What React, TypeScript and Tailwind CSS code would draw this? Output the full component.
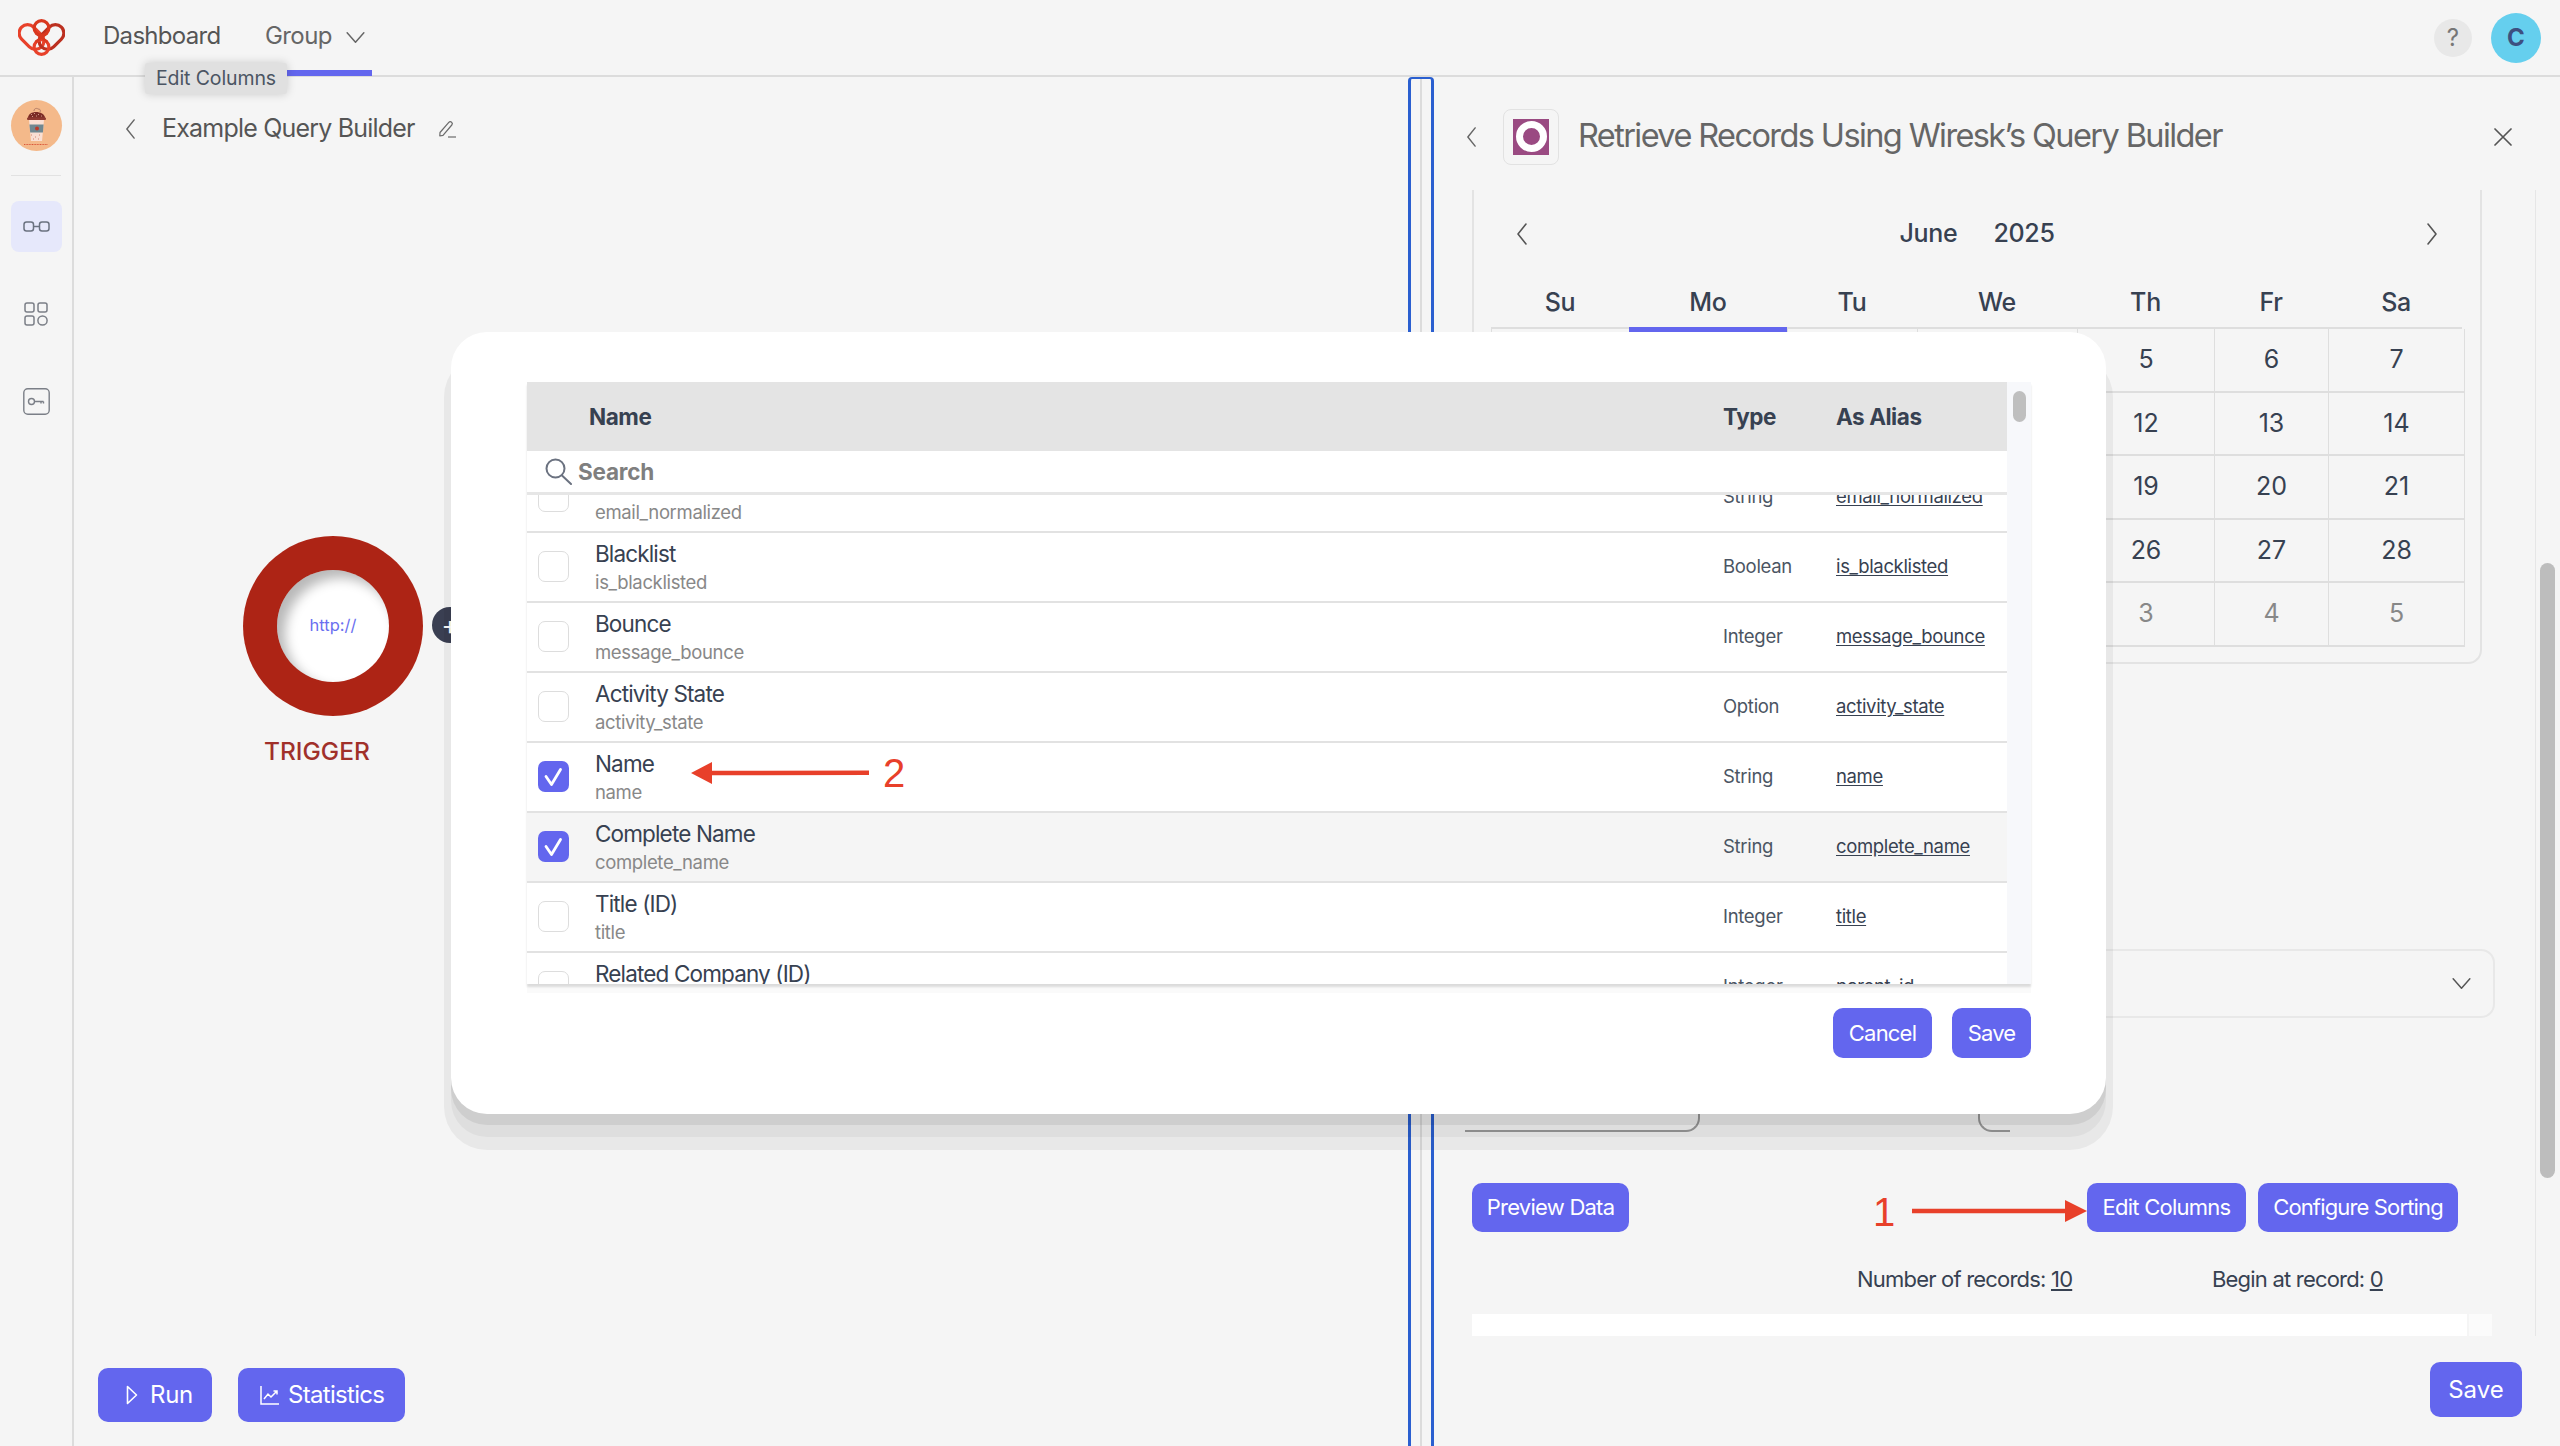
const INDIGO = "bg-[#6366ee]";

const rows = [
  { title: "", sub: "email_normalized", type: "String", alias: "email_normalized", checked: false },
  { title: "Blacklist", sub: "is_blacklisted", type: "Boolean", alias: "is_blacklisted", checked: false },
  { title: "Bounce", sub: "message_bounce", type: "Integer", alias: "message_bounce", checked: false },
  { title: "Activity State", sub: "activity_state", type: "Option", alias: "activity_state", checked: false },
  { title: "Name", sub: "name", type: "String", alias: "name", checked: true },
  { title: "Complete Name", sub: "complete_name", type: "String", alias: "complete_name", checked: true, hover: true },
  { title: "Title (ID)", sub: "title", type: "Integer", alias: "title", checked: false },
  { title: "Related Company (ID)", sub: "parent_id", type: "Integer", alias: "parent_id", checked: false },
];

const weekdays = ["Su", "Mo", "Tu", "We", "Th", "Fr", "Sa"];
const days = [
  [1, 2, 3, 4, 5, 6, 7],
  [8, 9, 10, 11, 12, 13, 14],
  [15, 16, 17, 18, 19, 20, 21],
  [22, 23, 24, 25, 26, 27, 28],
  [29, 30, 1, 2, 3, 4, 5],
];

function Chevron({ dir, className }: { dir: "left" | "right" | "down"; className?: string }) {
  const pts = dir === "left" ? "10,1 2,11 10,21" : dir === "right" ? "2,1 10,11 2,21" : "1,2 10,12 19,2";
  const box = dir === "down" ? "0 0 20 14" : "0 0 12 22";
  return (
    <svg viewBox={box} className={className} fill="none" stroke="currentColor" strokeWidth="1.6" strokeLinecap="round" strokeLinejoin="round">
      <polyline points={pts} />
    </svg>
  );
}

function Logo() {
  return (
    <svg viewBox="0 0 47 37" className="h-[37px] w-[47px]" fill="none" strokeWidth="3.2">
      <rect x="5" y="4" width="17" height="28" rx="8.5" transform="rotate(-45 13.5 18)" stroke="#e8412a" />
      <rect x="25" y="4" width="17" height="28" rx="8.5" transform="rotate(45 33.5 18)" stroke="#bc3020" />
      <circle cx="23.5" cy="9" r="7.4" stroke="#d9381f" />
      <circle cx="23.5" cy="28" r="7.4" stroke="#e8412a" />
      <path d="M17.5 14l12 9M29.5 14l-12 9" stroke="#d9381f" strokeWidth="2.4" />
    </svg>
  );
}

function CupAvatar() {
  return (
    <div className="flex h-[51px] w-[51px] items-center justify-center rounded-full bg-[#f4b98a]">
      <svg viewBox="0 0 26 40" className="h-[40px] w-[26px]" fill="none">
        <path d="M11 5c0-3 3-3 4-2M15 3c2 0 3 1 2 3" stroke="#a5705f" strokeWidth="0.8" />
        <path d="M5 12c0-4 4-6 8-6s9 2 9 6z" fill="#7c2d26" />
        <path d="M8 8.5h1M11 7.5h1M15 8.5h1M18 10h1M9 10.5h1M13 10h1" stroke="#e9b9a5" strokeWidth="0.8" />
        <rect x="4" y="11.5" width="19" height="2.6" rx="1" fill="#8f3a30" />
        <path d="M6 14h15l-2 21H8z" fill="#f9dfd3" />
        <path d="M6.4 18.5h14.2l-.7 8H7.2z" fill="#6f8790" />
        <circle cx="14" cy="22.5" r="2" fill="#b93a2a" />
        <path d="M8 29h1M12 31h1M16 29h1M10 33h1M15 33h1" stroke="#c9705c" strokeWidth="0.8" />
        <path d="M1 38.5h24" stroke="#d9573a" strokeWidth="1" strokeDasharray="1 0.6" />
      </svg>
    </div>
  );
}

function GlassesIcon() {
  return (
    <svg viewBox="0 0 27 11" className="h-[11px] w-[27px]" fill="none" stroke="#6b7280" strokeWidth="1.5">
      <rect x="1" y="1" width="9.5" height="9" rx="2.5" />
      <rect x="16.5" y="1" width="9.5" height="9" rx="2.5" />
      <path d="M10.5 5.5h6" />
    </svg>
  );
}

function GridIcon() {
  return (
    <svg viewBox="0 0 24 24" className="h-[24px] w-[24px]" fill="none" stroke="#7b7f87" strokeWidth="1.5">
      <rect x="1" y="1" width="9" height="9" rx="2" />
      <rect x="14" y="1" width="9" height="9" rx="2" />
      <rect x="1" y="14" width="9" height="9" rx="2" />
      <circle cx="18.5" cy="18.5" r="4.6" />
    </svg>
  );
}

function KeyIcon() {
  return (
    <svg viewBox="0 0 27 27" className="h-[27px] w-[27px]" fill="none" stroke="#7b7f87" strokeWidth="1.4">
      <rect x="0.8" y="0.8" width="25.4" height="25.4" rx="4" />
      <circle cx="8.5" cy="13.5" r="3" />
      <path d="M11.5 13.5h9M18 13.5v2M20.5 13.5v2" />
    </svg>
  );
}

function Pencil() {
  return (
    <svg viewBox="0 0 18 18" className="h-[18px] w-[18px]" fill="none" stroke="#6b6b6b" strokeWidth="1.2" strokeLinejoin="round">
      <path d="M2 12.5 10.8 2.4a2 2 0 0 1 2.8-.2 2 2 0 0 1 .2 2.8L5 15.4l-3.2.6z" />
      <path d="M10 17h8" />
    </svg>
  );
}

function SearchIcon() {
  return (
    <svg viewBox="0 0 27 27" className="h-[27px] w-[27px]" fill="none" stroke="#6b7280" strokeWidth="2" strokeLinecap="round">
      <circle cx="10.5" cy="10.5" r="9" />
      <path d="M17 17.5 26 26" />
    </svg>
  );
}

function Check() {
  return (
    <svg viewBox="0 0 31 31" className="h-[31px] w-[31px]" fill="none" stroke="#fff" strokeWidth="2.8" strokeLinecap="round" strokeLinejoin="round">
      <path d="M8 15.5l5.5 8 9-15" />
    </svg>
  );
}

function Button({ children, className }: { children: React.ReactNode; className: string }) {
  return (
    <button className={`flex items-center justify-center rounded-[10px] ${INDIGO} text-white ${className}`}>
      {children}
    </button>
  );
}

function ArrowLeft() {
  return (
    <svg viewBox="0 0 178 22" className="h-[22px] w-[178px]" fill="#e8402a">
      <path d="M0 11 21 0v8.8L178 8.5v4.5L21 13.2V22z" />
    </svg>
  );
}

function ArrowRight() {
  return (
    <svg viewBox="0 0 175 22" className="h-[22px] w-[175px]" fill="#e8402a">
      <path d="M175 11 153 0v8.8H0v4.4h153V22z" />
    </svg>
  );
}

function ColumnRow({ row }: { row: (typeof rows)[number] }) {
  return (
    <div className={`grid h-[70px] grid-cols-[68px_1128px_113px_171px] items-center border-b-2 border-[#e2e2e2] ${row.hover ? "bg-[#f5f5f5]" : "bg-white"}`}>
      <div className="pb-[1px] pl-[11px]">
        {row.checked ? (
          <div className={`h-[31px] w-[31px] rounded-[7px] ${INDIGO}`}>
            <Check />
          </div>
        ) : (
          <div className="h-[31px] w-[31px] rounded-[7px] border border-[#dddddd] bg-white" />
        )}
      </div>
      <div className="flex flex-col pt-[2px]">
        <span className="h-[28px] text-[22.5px] leading-[28px] tracking-[-0.85px] text-[#374151]">{row.title}</span>
        <span className="h-[28px] text-[18.5px] leading-[28px] tracking-[-0.35px] text-[#888888]">{row.sub}</span>
      </div>
      <span className="text-[18.5px] tracking-[-0.3px] text-[#4b5563]">{row.type}</span>
      <span className="text-[18.5px] tracking-[-0.35px] text-[#374151] underline underline-offset-2">{row.alias}</span>
    </div>
  );
}

function Calendar() {
  const cols = "grid grid-cols-[138px_158px_130px_160px_137px_114px_136px]";
  return (
    <div className="h-[474px] w-[1010px] rounded-b-[14px] border-x-2 border-b-2 border-[#e3e3e3] pl-[17px] pr-[18px]">
      <div className="flex h-[86px] items-center justify-between pl-[25px] pr-[24px] pt-[2px] text-[#555]">
        <Chevron dir="left" className="h-[22px] w-[12px]" />
        <div className="flex gap-[36px] text-[25px] font-medium tracking-[-0.3px] text-[#374151]">
          <span>June</span>
          <span>2025</span>
        </div>
        <Chevron dir="right" className="h-[22px] w-[12px]" />
      </div>
      <div className={`${cols} h-[51px] items-center pt-[2px] text-[25px] font-medium tracking-[-0.3px] text-[#374151]`}>
        {weekdays.map((d) => (
          <div key={d} className={`relative flex h-full items-center justify-center ${d === "Mo" ? "z-10" : ""}`}>
            {d}
            {d === "Mo" ? <div className={`absolute inset-x-0 top-full h-[5px] ${INDIGO}`} /> : null}
          </div>
        ))}
      </div>
      <div className={`${cols} border-t-2 border-l border-[#dedede]`}>
        {days.flat().map((n, i) => (
          <div
            key={i}
            className={`flex h-[63.6px] items-center justify-center border-r border-b-2 border-[#dedede] text-[25px] ${i >= 30 ? "text-[#888888]" : "text-[#374151]"}`}
          >
            {n}
          </div>
        ))}
      </div>
    </div>
  );
}

function ColumnsModal() {
  return (
    <div className="absolute left-[451px] top-[332px] h-[782px] w-[1655px] rounded-[36px] bg-white pl-[76px] pt-[50px] shadow-[0_11px_0_0_rgba(0,0,0,0.07),0_23px_0_0_rgba(0,0,0,0.04),0_29px_0_7px_rgba(0,0,0,0.05)]">
      <div className="flex h-[602px] w-[1504px] shadow-[0_3px_2px_rgba(0,0,0,0.12),0_9px_0_rgba(0,0,0,0.02)]">
        <div className="flex w-[1480px] flex-col">
          <div className="grid h-[69px] shrink-0 grid-cols-[62px_1134px_113px_171px] items-center bg-[#e4e4e4] text-[22.5px] font-bold tracking-[-0.45px] text-[#374151]">
            <span />
            <span>Name</span>
            <span>Type</span>
            <span>As Alias</span>
          </div>
          <div className="flex h-[44px] shrink-0 items-center gap-[6px] border-b-[3px] border-[#e6e6e6] bg-white pl-[18px] text-[22.5px] font-bold tracking-[-0.2px] text-[#7f7f7f]">
            <SearchIcon />
            <span>Search</span>
          </div>
          <div className="min-h-0 flex-1 overflow-hidden">
            <div className="-mt-[32px]">
              {rows.map((r) => (
                <ColumnRow key={r.sub} row={r} />
              ))}
            </div>
          </div>
        </div>
        <div className="w-[24px] bg-[#f7f8fb] px-[6px] pt-[9px]">
          <div className="h-[31px] w-[13px] rounded-full bg-[#bfbfbf]" />
        </div>
      </div>
      <div className="mt-[24px] flex w-[1504px] justify-end gap-[20px] text-[22px] tracking-[-0.8px]">
        <Button className="h-[50px] w-[99px]">Cancel</Button>
        <Button className="h-[50px] w-[79px]">Save</Button>
      </div>
    </div>
  );
}

export default function App() {
  return (
    <div className="relative flex h-[1446px] w-[2560px] flex-col overflow-hidden bg-[#f5f5f5] font-['Inter',sans-serif]">
      <header className="flex h-[77px] shrink-0 items-center border-b-2 border-[#dcdcdc]">
        <div className="ml-[18px] mr-[38px]">
          <Logo />
        </div>
        <span className="w-[118px] pb-[3px] text-[24px] tracking-[-0.7px] text-[#555555]">Dashboard</span>
        <div className="relative ml-[20px] flex h-full w-[131px] items-center gap-[14px] pl-[24px] text-[24px] tracking-[-0.6px] text-[#666666]">
          <span className="pb-[3px]">Group</span>
          <Chevron dir="down" className="h-[13px] w-[19px]" />
          <div className={`absolute inset-x-0 -bottom-[1px] h-[6px] ${INDIGO}`} />
        </div>
        <div className="ml-auto flex items-center gap-[19px] pr-[19px]">
          <div className="flex h-[38px] w-[38px] items-center justify-center rounded-full bg-[#e8e8e8] text-[24px] text-[#777777]">?</div>
          <div className="flex h-[50px] w-[50px] items-center justify-center rounded-full bg-[#65cfee] text-[24px] font-bold text-[#3d5080]">C</div>
        </div>
      </header>

      <div className="flex min-h-0 flex-1">
        <aside className="flex w-[74px] shrink-0 flex-col items-center border-r-2 border-[#dcdcdc] pt-[23px]">
          <CupAvatar />
          <div className="mt-[24px] h-px w-[50px] bg-[#e2e2e2]" />
          <div className="mt-[25px] flex h-[51px] w-[51px] items-center justify-center rounded-[8px] bg-[#e6e8fb]">
            <GlassesIcon />
          </div>
          <div className="mt-[50px]">
            <GridIcon />
          </div>
          <div className="mt-[62px]">
            <KeyIcon />
          </div>
        </aside>

        <main className="relative flex w-[1334px] shrink-0 flex-col">
          <div className="flex h-[104px] items-center pl-[51px] text-[#666666]">
            <Chevron dir="left" className="h-[20px] w-[11px]" />
            <span className="ml-[26px] w-[254px] whitespace-nowrap text-[25px] tracking-[-0.8px] text-[#555555]">Example Query Builder</span>
            <div className="ml-[22px]">
              <Pencil />
            </div>
          </div>
          <div className="absolute left-[169px] top-[459px] flex h-[180px] w-[180px] items-center justify-center rounded-full bg-[#ad2415]">
            <div className="flex h-[112px] w-[112px] items-center justify-center rounded-full bg-white pb-[2px] text-[16.5px] text-[#6a6ff0] shadow-[inset_8px_8px_12px_rgba(0,0,0,0.28)]">
              http://
            </div>
          </div>
          <div className="absolute left-[358px] top-[530px] flex h-[36px] w-[36px] items-center justify-center rounded-full bg-[#3a3f52] text-[26px] leading-none text-white">+</div>
          <span className="absolute left-[190px] top-[656px] text-[24.5px] font-medium text-[#a0302a]">TRIGGER</span>
          <div className="mt-auto flex gap-[26px] pb-[24px] pl-[24px] text-[24px]">
            <Button className="h-[54px] w-[114px] !justify-start gap-[12px] pl-[28px] tracking-[-0.3px]">
              <svg viewBox="0 0 12 20" className="h-[20px] w-[12px]" fill="none" stroke="#fff" strokeWidth="1.6" strokeLinejoin="round">
                <path d="M1.5 1.5 10.5 10l-9 8.5z" />
              </svg>
              Run
            </Button>
            <Button className="h-[54px] w-[167px] !justify-start gap-[8px] pl-[22px] tracking-[-0.7px]">
              <svg viewBox="0 0 20 20" className="h-[20px] w-[20px]" fill="none" stroke="#fff" strokeWidth="1.5">
                <path d="M1 1v18h18" />
                <path d="M4 14l4-5 3 3 6-6M13.5 6H17v3.5" />
              </svg>
              Statistics
            </Button>
          </div>
        </main>

        <div className="flex w-[26px] shrink-0 justify-center rounded-t-[4px] border-x-[3px] border-t-[2px] border-[#2a5fd0]">
          <div className="h-full w-[2px] bg-[#dcdcdc]" />
        </div>

        <section className="flex min-w-0 flex-1 flex-col">
          <div className="flex h-[113px] shrink-0 items-center pl-[32px] pr-[48px] pt-[6px] text-[#666666]">
            <Chevron dir="left" className="h-[20px] w-[11px]" />
            <div className="ml-[26px] flex h-[56px] w-[56px] items-center justify-center rounded-[8px] border border-[#e2e2e2]">
              <div className="flex h-[36px] w-[36px] items-center justify-center bg-[#9a4a82]">
                <div className="h-[31px] w-[31px] rounded-full border-[7px] border-white" />
              </div>
            </div>
            <span className="ml-[19px] text-[32.5px] tracking-[-1.6px] text-[#666666]">Retrieve Records Using Wiresk’s Query Builder</span>
            <svg viewBox="0 0 18 18" className="ml-auto h-[18px] w-[18px]" fill="none" stroke="#555" strokeWidth="1.7" strokeLinecap="round">
              <path d="M1 1l16 16M17 1 1 17" />
            </svg>
          </div>
          <div className="flex h-[1146px] min-h-0 flex-1 overflow-hidden pl-[38px]">
            <div className="w-[1063px] shrink-0">
              <Calendar />
              <div className="mt-[285px] flex h-[69px] w-[1023px] items-center justify-end rounded-[14px] border-2 border-[#e8e8e8] pr-[22px] text-[#555]">
                <Chevron dir="down" className="h-[13px] w-[19px]" />
              </div>
              <div className="-ml-[7px] mt-[60px] flex h-[54px]">
                <div className="h-full w-[235px] rounded-br-[14px] border-b-2 border-r-2 border-[#9a9a9a]" />
                <div className="ml-[278px] h-full w-[32px] rounded-bl-[14px] border-b-2 border-l-2 border-[#9a9a9a]" />
              </div>
              <div className="mt-[51px] flex h-[49px] items-center text-[22px] tracking-[-0.75px]">
                <Button className="h-[49px] w-[157px]">Preview Data</Button>
                <Button className="ml-[458px] h-[49px] w-[159px]">Edit Columns</Button>
                <Button className="ml-[12px] h-[49px] w-[200px] tracking-[-0.85px]">Configure Sorting</Button>
              </div>
              <div className="relative mt-[35px] flex h-[24px] items-center pl-[385px] text-[22px] tracking-[-0.8px] text-[#374151]">
                <span className="w-[355px]">
                  Number of records: <span className="underline underline-offset-2">10</span>
                </span>
                <span>
                  Begin at record: <span className="underline underline-offset-2">0</span>
                </span>
              </div>
              <div className="mt-[23px] flex h-[40px] w-[1020px]">
                <div className="w-[995px] bg-white" />
                <div className="ml-[2px] w-[23px] bg-[#fbfbfb]" />
              </div>
            </div>
            <div className="h-full flex-1 border-l border-[#e6e6e6] pl-[4px]">
              <div className="mt-[373px] h-[615px] w-[15px] rounded-full bg-[#bdbdbd]" />
            </div>
          </div>
          <div className="flex h-[110px] shrink-0 items-start justify-end pr-[38px] pt-[26px]">
            <Button className="h-[55px] w-[92px] text-[24px]">Save</Button>
          </div>
        </section>
      </div>

      <ColumnsModal />

      <div className="absolute left-[145px] top-[63px] flex h-[31px] w-[142px] items-center justify-center rounded-[3px] bg-[#e0e0e0] text-[19.5px] tracking-[-0.1px] text-[#4b5563] shadow-[0_0_10px_rgba(0,0,0,0.18)]">
        Edit Columns
      </div>

      <div className="absolute left-[691px] top-[753px] flex items-center gap-[14px]">
        <ArrowLeft />
        <span className="font-['Liberation_Sans',sans-serif] text-[40px] leading-none text-[#e8402a]">2</span>
      </div>
      <div className="absolute left-[1873px] top-[1192px] font-['Liberation_Sans',sans-serif] text-[40px] leading-none text-[#e8402a]">1</div>
      <div className="absolute left-[1912px] top-[1200px]">
        <ArrowRight />
      </div>
    </div>
  );
}
